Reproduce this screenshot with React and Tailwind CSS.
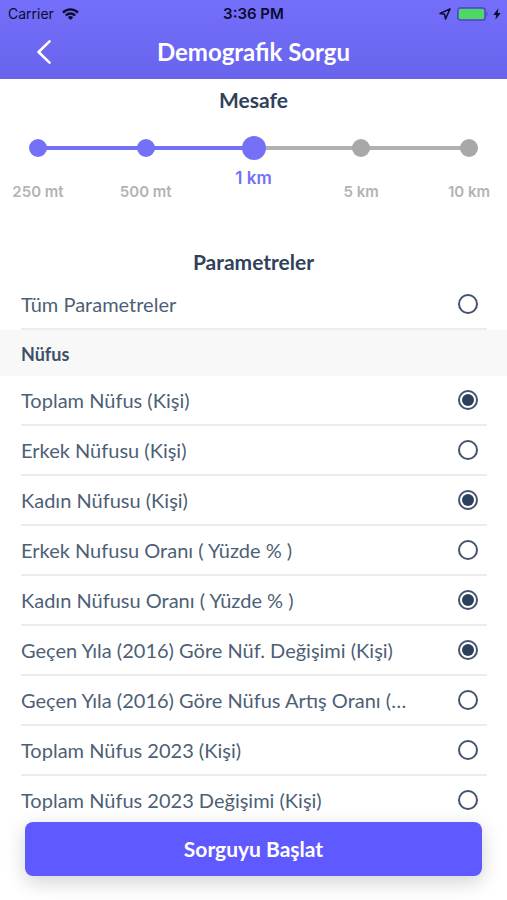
import { useState } from 'react';
import clsx from 'clsx';

const distances = ['250 mt', '500 mt', '1 km', '5 km', '10 km'];

const populationParams = [
    { id: 'total', label: 'Toplam Nüfus (Kişi)', checked: true },
    { id: 'male', label: 'Erkek Nüfusu (Kişi)', checked: false },
    { id: 'female', label: 'Kadın Nüfusu (Kişi)', checked: true },
    { id: 'maleRatio', label: 'Erkek Nufusu Oranı ( Yüzde % )', checked: false },
    { id: 'femaleRatio', label: 'Kadın Nüfusu Oranı ( Yüzde % )', checked: true },
    { id: 'change', label: 'Geçen Yıla (2016) Göre Nüf. Değişimi (Kişi)', checked: true },
    { id: 'growth', label: 'Geçen Yıla (2016) Göre Nüfus Artış Oranı (Yüzde % )', checked: false },
    { id: 'total2023', label: 'Toplam Nüfus 2023 (Kişi)', checked: false },
    { id: 'change2023', label: 'Toplam Nüfus 2023 Değişimi (Kişi)', checked: false },
];

const StatusBar = () => (
    <div className="grid grid-cols-3 items-center h-7 px-2 font-['Inter',sans-serif] text-sm text-[#0c0a2e]">
        <div className="flex items-center gap-2">
            <span>Carrier</span>
            <svg className="w-[17px] h-3" viewBox="0 0 17 12" fill="none" stroke="currentColor" strokeWidth="2.4">
                <path d="M1 4.6C5.2.3 11.8.3 16 4.6" />
                <path d="M3.8 7.5c2.7-2.7 6.7-2.7 9.4 0" />
                <path d="M8.5 12 5.8 9.2c1.5-1.5 3.9-1.5 5.4 0z" fill="currentColor" stroke="none" />
            </svg>
        </div>
        <span className="text-center text-[15px] font-semibold">3:36 PM</span>
        <div className="flex items-center justify-end">
            <svg className="w-3 h-3 mr-1.5" viewBox="0 0 12 12" fill="none" stroke="currentColor" strokeWidth="1.5" strokeLinejoin="round">
                <path d="M11 1 1 5.4l4.6.9.9 4.7z" />
            </svg>
            <svg className="w-8 h-[14px]" viewBox="0 0 32 14">
                <rect x=".8" y=".8" width="27.4" height="12.4" rx="2.8" fill="none" stroke="#4a46b0" strokeWidth="1.2" />
                <rect x="2" y="2" width="25" height="10" rx="1.6" fill="#4cd964" />
                <path d="M29.5 4.8c1.4.6 1.4 3.8 0 4.4z" fill="#4a46b0" />
            </svg>
            <svg className="w-2 h-3 ml-1 -mr-0.5" viewBox="0 0 8 12" fill="currentColor">
                <path d="M5.4.3.3 6.9h2.9L2.4 11.7 7.7 5H4.7z" />
            </svg>
        </div>
    </div>
);

const DistanceSlider = ({ value, onChange }) => (
    <div role="radiogroup" aria-labelledby="distance-title" className="relative flex justify-between mt-6">
        {/* track behind the stops */}
        <div className="absolute left-[38px] right-[38px] top-[10px] h-1 bg-[#b0b0b0]">
            <div className="h-full bg-[#7471f8]" style={{ width: `${(value / (distances.length - 1)) * 100}%` }} />
        </div>
        {distances.map((label, i) => (
            <label key={label} className="relative flex flex-col items-center w-[76px] cursor-pointer">
                <span className="flex items-center h-6">
                    <input
                        type="radio"
                        name="distance"
                        checked={i === value}
                        onChange={() => onChange(i)}
                        className={clsx(
                            'appearance-none block rounded-full',
                            i === value ? 'w-6 h-6' : 'w-[18px] h-[18px]',
                            i <= value ? 'bg-[#7471f8]' : 'bg-[#a8a8a8]'
                        )}
                    />
                </span>
                <span
                    className={clsx(
                        "font-['Inter',sans-serif] font-semibold leading-5 whitespace-nowrap",
                        i === value ? 'mt-2 text-[17px] text-[#7471f8]' : 'mt-[22px] text-[15px] text-[#b3b3b3]'
                    )}
                >
                    {label}
                </span>
            </label>
        ))}
    </div>
);

const ParamRow = ({ label, checked, onToggle }) => (
    <label className="flex items-center justify-between h-[50px] ml-[21px] mr-5 pr-[9px] border-b-2 border-[#ececec] cursor-pointer">
        <span className="flex-1 min-w-0 mr-11 truncate text-xl text-[#4d5f76]">{label}</span>
        <span className="grid place-items-center shrink-0">
            <input
                type="checkbox"
                checked={checked}
                onChange={onToggle}
                className="peer col-start-1 row-start-1 appearance-none block w-5 h-5 rounded-full border-2 border-[#43546c]"
            />
            <span className="col-start-1 row-start-1 hidden peer-checked:block w-3 h-3 rounded-full bg-[#2c405c] pointer-events-none" />
        </span>
    </label>
);

const App = () => {
    const [distance, setDistance] = useState(2);
    const [params, setParams] = useState(populationParams);

    const allChecked = params.every((p) => p.checked);

    const toggle = (id) => {
        setParams((prev) => prev.map((p) => (p.id === id ? { ...p, checked: !p.checked } : p)));
    };

    const toggleAll = () => {
        setParams((prev) => prev.map((p) => ({ ...p, checked: !allChecked })));
    };

    return (
        <div className="flex flex-col h-screen bg-white font-['Lato',sans-serif] text-[#2f425c]">
            <header className="shrink-0 bg-linear-to-b from-[#736ffa] to-[#6964ee]">
                <StatusBar />
                <div className="grid grid-cols-[1fr_auto_1fr] items-center h-[51px] pb-1">
                    <button type="button" aria-label="Geri" className="justify-self-start ml-8 p-1 text-white">
                        <svg className="w-4 h-6" viewBox="0 0 16 24" fill="none" stroke="currentColor" strokeWidth="2.6" strokeLinecap="round" strokeLinejoin="round">
                            <path d="M13.5 1.4 2.6 12l10.9 10.6" />
                        </svg>
                    </button>
                    <h1 className="text-2xl leading-7 font-bold text-white">Demografik Sorgu</h1>
                </div>
            </header>

            <main className="flex-1 min-h-0 overflow-y-auto [scrollbar-width:none]">
                <h2 id="distance-title" className="mt-[9px] text-center text-[21px] leading-6 font-bold">Mesafe</h2>
                <DistanceSlider value={distance} onChange={setDistance} />

                <h2 className="mt-12 text-center text-[21px] leading-6 font-bold">Parametreler</h2>
                <div className="mt-1.5">
                    <ParamRow label="Tüm Parametreler" checked={allChecked} onToggle={toggleAll} />
                </div>
                <h3 className="px-[21px] pt-3 pb-2.5 bg-[#f8f8f8] text-lg leading-6 font-bold text-[#3d5069]">Nüfus</h3>
                {params.map((p) => (
                    <ParamRow key={p.id} label={p.label} checked={p.checked} onToggle={() => toggle(p.id)} />
                ))}
            </main>

            <footer className="shrink-0 px-[25px] pt-2 pb-6 bg-white">
                <button
                    type="button"
                    className="block w-full h-[54px] rounded-lg bg-[#5f5aff] text-[21px] font-bold text-white shadow-[0_6px_20px_rgba(0,0,0,0.18)]"
                >
                    Sorguyu Başlat
                </button>
            </footer>
        </div>
    );
};

export default App;
